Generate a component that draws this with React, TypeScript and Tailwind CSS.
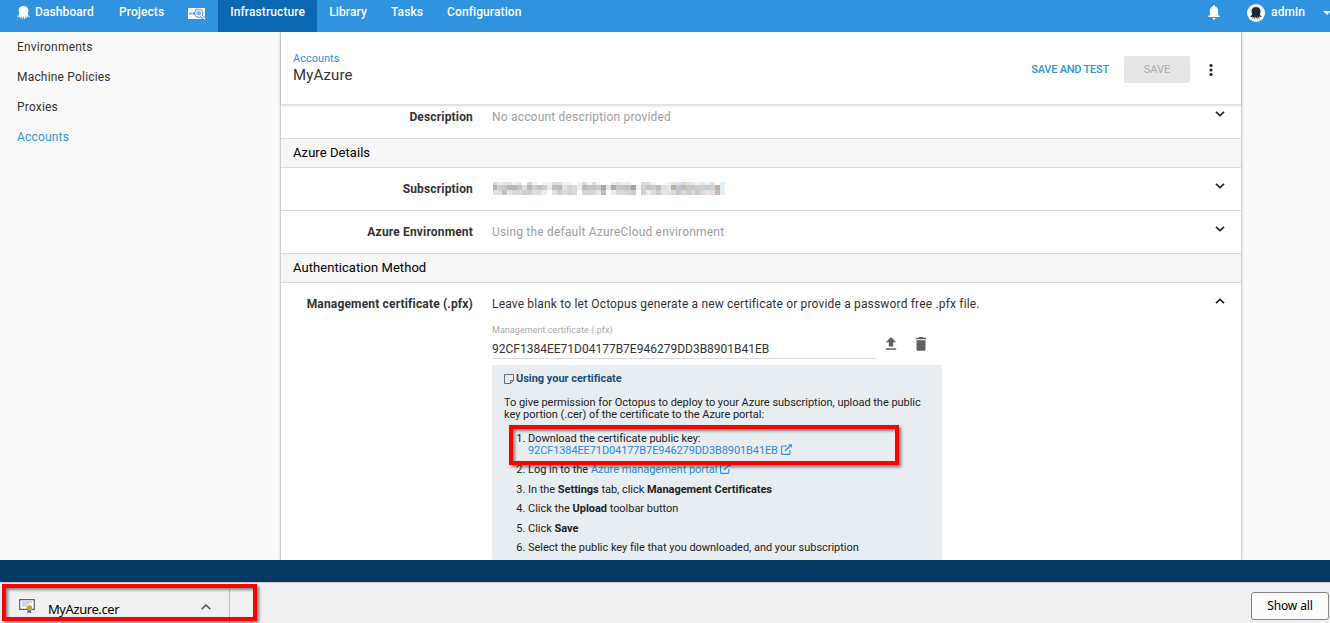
import type { ReactNode } from "react";

function Octopus({ className }: { className: string }) {
  return (
    <svg viewBox="1 1 24 24" className={className} fill="currentColor">
      <path d="M13 1C7.500 1 4 4.500 4 9.500c0 2.500 1 3.500 1 5.500 0 2.500-2 4-4 5.500 2 .8 4 .3 5.500-.7-.2 1.700-1 3-1.500 4.200 2.300-.5 3.800-2 4.500-4 .5 2-.1 3.700.5 5.500 1.800-1 2-3.500 2.500-5.500 1 2 1.200 4.500 3.500 5.500.6-1.900-.6-3.600-.2-5.500 1 2 2.700 3.500 4.700 3.800-.4-1.300-1.700-2.600-1.700-4.300 1.900 1.300 4 1.700 6.200 1-2.500-1.500-4-3-4-5.500 0-2 1.200-3.200 1.200-5.700C22.200 4.500 18.500 1 13 1z" />
    </svg>
  );
}

function Chevron({ up = false }: { up?: boolean }) {
  return (
    <svg viewBox="0 0 10 6" className="h-[6px] w-[10px]" fill="none" stroke="#222" strokeWidth="1.7">
      <path d={up ? "M1 5.100 5 1.300 9 5.100" : "M1 .9 5 4.700 9 .9"} />
    </svg>
  );
}

function External() {
  return (
    <svg viewBox="0 0 11 11" className="-my-[2px] ml-[3px] inline-block h-[11px] w-[11px] align-[1px]" fill="none" stroke="#2f93e0" strokeWidth="1.100">
      <path d="M6 2H1.500Q.6 2 .6 3v6.400q0 1 .9 1h6.400q1 0 1-1V6" />
      <path d="M4 7 9.500 1.500" strokeWidth="1.500" />
      <path d="M7 .2h3.900v3.900z" fill="#2f93e0" stroke="none" />
    </svg>
  );
}

const mosaic = [
  ["#ddd6cf", "#eceae8", "#e8e6ea", "#e6e2e0", "#eef0f2", "#e4e8ec", "#ffffff", "#d8d8da", "#f4f2f0", "#ffffff", "#eef2f6", "#f4f2f4", "#dcdcdc", "#e2dedc", "#f0eee8", "#f0f2f4", "#ffffff", "#f2f2f2", "#dcdcdc", "#f6f4f2", "#dcdcde", "#f4f4f6", "#ffffff", "#ffffff", "#e8e8e8", "#e4e2e4", "#eeeeee", "#eeeae6", "#ffffff", "#ffffff", "#dadada", "#dedede", "#f2f2f4", "#ffffff", "#ffffff", "#f2f2f2", "#e8e6e4", "#e0e2e4", "#dedada", "#e4e4e6", "#e6e8ea", "#f0f0f0", "#eae8e6", "#eef2f4", "#e2e2e2", "#ffffff", "#e4eef8"],
  ["#b8b4b8", "#d2cdca", "#c4c8cc", "#bbb5ae", "#b7b7b9", "#c3c8cb", "#dedede", "#b0bdc4", "#d8cfc3", "#b8c3cc", "#d0ccca", "#e8e8ea", "#c8bdb5", "#b0bec8", "#e8e1d8", "#d7d7d9", "#dadddd", "#ececec", "#bdb7c0", "#c3c1ca", "#b9c3c8", "#d0ccc5", "#a0a8b0", "#e9e2d5", "#9fadb8", "#c8c8c4", "#c0c7bf", "#bec2c8", "#a99d9d", "#f4f4f4", "#d2d2d2", "#c8c3c0", "#cbc9c9", "#b0bdc3", "#dedede", "#e4e4e4", "#b8afa7", "#bac9d3", "#c8b9b1", "#c8c8ca", "#bdcbd1", "#cccccc", "#c6d0d6", "#c9c9cb", "#d0d0d0", "#bcafa8", "#e4eef8"],
  ["#e1e1df", "#dddddd", "#b8c3c6", "#e6e3e1", "#d8d8d8", "#dadada", "#d4cccc", "#c8d3d8", "#d9dfe2", "#d8dfe4", "#efefef", "#ffffff", "#e2dfdd", "#d1cece", "#dadada", "#d6d2ce", "#d3d9dc", "#ffffff", "#d8d4d7", "#d8d5d0", "#ddd6d3", "#e6e6e8", "#b8bdba", "#ffffff", "#ebebeb", "#dadada", "#d9d9db", "#ded4cf", "#cecdca", "#ffffff", "#d3cfd1", "#ececec", "#dedede", "#c8cccb", "#e4e4e4", "#e5e2df", "#d6dbde", "#bfc9d2", "#d9d9d9", "#c9cfca", "#d8d8d4", "#d0c8c3", "#d5dadd", "#e8e4e2", "#e4dcd8", "#c4b8b1", "#e4eef8"],
];

function Redacted() {
  return (
    <svg viewBox="0 0 235 13" className="mb-[2px] h-[13px] w-[235px]" shapeRendering="crispEdges">
      {mosaic.map((row, r) =>
        row.map((c, i) => (
          <rect key={`${r}-${i}`} x={i * 4.950 + 0.5} y={[0, 3, 8][r]} width="5" height={[3, 5, 5][r]} fill={c} />
        ))
      )}
    </svg>
  );
}

function SectionTitle({ children }: { children: ReactNode }) {
  return (
    <div className="flex h-[29px] items-center border-b border-[#dcdcdc] bg-[#f6f6f6] pl-3 text-[13px] tracking-[0.060px] text-black">
      {children}
    </div>
  );
}

function Row({ label, children, first = false }: { label: string; children: ReactNode; first?: boolean }) {
  return (
    <div className={first ? "flex h-[34px] items-start border-b border-[#dcdcdc] pt-[2px]" : "flex h-[43px] items-start border-b border-[#dcdcdc] pt-[11px]"}>
      <div className="w-[192px] text-right text-[12px] leading-5 font-bold tracking-[0.170px]">{label}</div>
      <div className="ml-[19px] flex h-5 grow items-center text-[12px] tracking-[0.190px] text-[#9e9e9e]">{children}</div>
      <div className="mr-[16px] flex h-[13px] items-center">
        <Chevron />
      </div>
    </div>
  );
}

function NavItem({ children }: { children: ReactNode }) {
  return <div className="flex h-full items-center px-3 pb-2">{children}</div>;
}

export default function App() {
  return (
    <div className="relative flex h-[623px] w-[1330px] flex-col overflow-hidden bg-[#fafafa] font-['Roboto',sans-serif] text-[13px] text-[#333]">
      <nav className="flex h-8 shrink-0 bg-[#2f93e0] text-[12px] font-medium tracking-[0.100px] text-white">
        <div className="flex h-full w-[107px] items-center pb-2 pl-[17px]">
          <Octopus className="mt-[1px] mr-[5px] h-[13px] w-[13px]" />
          Dashboard
        </div>
        <NavItem>Projects</NavItem>
        <div className="flex h-full w-[42px] items-center justify-center pb-[6px]">
          <svg viewBox="0 0 18 13" className="h-[13px] w-[18px]" fill="none">
            <path d="M0 1h17v11H0z" fill="#fff" />
            <path d="M1.500 5.500h2v2h-2zM4.500 5.500h3v2h-3z" fill="#2f93e0" />
            <circle cx="10.800" cy="6.200" r="4.500" fill="#2f93e0" />
            <circle cx="10.800" cy="6.200" r="3" fill="#7fbcec" stroke="#fff" strokeWidth="1.200" />
            <path d="m13.300 8.800 4 3.700" stroke="#2f93e0" strokeWidth="3" />
            <path d="m13.300 8.800 3.800 3.500" stroke="#fff" strokeWidth="1.500" />
          </svg>
        </div>
        <div className="flex h-full w-[99px] items-center bg-[#0a67b1] pb-2 pl-3">Infrastructure</div>
        <NavItem>Library</NavItem>
        <NavItem>Tasks</NavItem>
        <NavItem>Configuration</NavItem>
        <div className="ml-auto flex h-full items-center pb-2">
          <svg viewBox="0 0 12 15" className="mr-[27px] h-[15px] w-[12px]" fill="currentColor">
            <path d="M6 0c-.7 0-1.100.5-1.100 1.100v.5C3 2.100 1.900 3.800 1.900 5.800v4L.3 11.300v.8h11.400v-.8l-1.600-1.500v-4c0-2-1.100-3.700-3-4.200v-.5C7.100.5 6.700 0 6 0zM4.500 13c0 .8.700 1.500 1.500 1.500S7.500 13.800 7.500 13z" />
          </svg>
          <div className="mt-[2px] mr-[6px] flex h-[18px] w-[18px] items-center justify-center rounded-full bg-white text-[#15293d]">
            <Octopus className="h-[12px] w-[12px]" />
          </div>
          admin
          <svg viewBox="0 0 8 4" className="mt-[2px] -mr-px ml-[18px] h-[4px] w-[8px]" fill="currentColor">
            <path d="M0 0h8L4 4z" />
          </svg>
        </div>
      </nav>

      <main className="flex h-[528px] shrink-0 overflow-hidden">
        <aside className="w-[280px] shrink-0 pl-[17px] text-[12px] leading-[30px] tracking-[0.190px]">
          <div>Environments</div>
          <div>Machine Policies</div>
          <div>Proxies</div>
          <div className="text-[#2f93e0]">Accounts</div>
        </aside>
        <section className="h-[528px] w-[962px] shrink-0 border-x border-[#cfcfcf] bg-white shadow-[0_0_3px_rgba(0,0,0,0.150)]">
          <header className="relative flex h-[73px] items-center border-b border-[#e0e0e0] pl-3 shadow-[0_1px_2px_rgba(0,0,0,0.150)]">
            <div className="pt-px">
              <div className="text-[11px] leading-[14px] text-[#2f93e0]">Accounts</div>
              <div className="text-[15px] leading-[19px] tracking-[0.120px]">MyAzure</div>
            </div>
            <div className="mt-[4px] ml-auto text-[11px] font-medium tracking-[-0.220px] text-[#2f93e0]">SAVE AND TEST</div>
            <div className="mt-[3px] ml-[15px] flex h-[27px] w-[66px] items-center justify-center rounded-[2px] bg-[#e5e5e5] pt-px text-[11px] text-[#aaa]">SAVE</div>
            <svg viewBox="0 0 4 14" className="mt-[4px] mr-[28px] ml-[19px] h-[14px] w-[4px]" fill="#222">
              <circle cx="2" cy="2.500" r="1.600" />
              <circle cx="2" cy="7" r="1.600" />
              <circle cx="2" cy="11.500" r="1.600" />
            </svg>
          </header>
          <Row label="Description" first>No account description provided</Row>
          <SectionTitle>Azure Details</SectionTitle>
          <Row label="Subscription"><Redacted /></Row>
          <Row label="Azure Environment">Using the default AzureCloud environment</Row>
          <SectionTitle>Authentication Method</SectionTitle>
          <div className="flex items-start pt-[11px]">
            <div className="w-[192px] text-right text-[12px] leading-5 font-bold tracking-[0.170px]">Management certificate (.pfx)</div>
            <div className="ml-[19px] w-[500px]">
              <div className="text-[12px] leading-5 tracking-[0.170px]">Leave blank to let Octopus generate a new certificate or provide a password free .pfx file.</div>
              <div className="flex h-[45px]">
                <div className="w-[384px] border-b border-[#dcdcdc] pt-[10px]">
                  <div className="text-[9px] leading-[12px] tracking-[0.050px] text-[#aaa]">Management certificate (.pfx)</div>
                  <div className="mt-[5px] text-[12px] leading-[17px]">92CF1384EE71D04177B7E946279DD3B8901B41EB</div>
                </div>
                <svg viewBox="0 0 12 13" className="mt-[23px] ml-[9px] h-[13px] w-[12px]" fill="#616161">
                  <path d="M6 0 .8 5.300h3V9.500h4.400V5.300h3zM.8 11.200h10.400v1.500H.8z" />
                </svg>
                <svg viewBox="0 0 12 14" className="mt-[23px] ml-[18px] h-[14px] w-[12px]" fill="#616161">
                  <path d="M4.200 0h3.600l.7.800h2.700v1.500H.8V.8h2.700zM1.500 3.200h9v9q0 1.500-1.500 1.500H3q-1.500 0-1.500-1.500z" />
                </svg>
              </div>
              <div className="mt-[6px] h-[210px] w-[450px] bg-[#e8edf1] pt-[7px] pl-3 text-[11px] leading-[12px] tracking-[-0.030px] text-[#222]">
                <div className="flex items-center leading-[13px] font-bold text-[#1a4f78]">
                  <svg viewBox="0 0 10 10" className="mr-[2px] h-[10px] w-[10px]" fill="none" stroke="#62727d">
                    <path d="M.5.5h9v6l-3 3h-6zM9.500 6.500h-3v3" />
                  </svg>
                  Using your certificate
                </div>
                <p className="mt-[12px] whitespace-nowrap">
                  To give permission for Octopus to deploy to your Azure subscription, upload the public
                  <br />
                  key portion (.cer) of the certificate to the Azure portal:
                </p>
                <ol className="mt-[12px] flex list-decimal flex-col gap-[7.400px] pl-[24px] whitespace-nowrap">
                  <li>
                    Download the certificate public key:
                    <br />
                    <span className="tracking-[-0.110px] text-[#2f8ade]">92CF1384EE71D04177B7E946279DD3B8901B41EB<External /></span>
                  </li>
                  <li>Log in to the <span className="text-[#2f8ade]">Azure management portal<External /></span></li>
                  <li>In the <b>Settings</b> tab, click <b>Management Certificates</b></li>
                  <li>Click the <b>Upload</b> toolbar button</li>
                  <li>Click <b>Save</b></li>
                  <li>Select the public key file that you downloaded, and your subscription</li>
                </ol>
              </div>
            </div>
            <div className="mt-[4px] mr-[16px] ml-auto"><Chevron up /></div>
          </div>
        </section>
      </main>

      <div className="h-[22px] shrink-0 bg-[#043a63]" />
      <footer className="flex h-[41px] shrink-0 items-start border-t border-[#d0d0d0] bg-[#f1f1f1] font-['Noto_Sans','Open_Sans',sans-serif] text-[12px] text-black">
        <div className="mt-[6px] flex h-[34px] w-[230px] items-center border-r border-[#bbb] pl-[19px]">
          <svg viewBox="0 0 16 15" className="mt-px h-[15px] w-[16px]" fill="none">
            <path d="M.7.7h14.600v9.600H.7z" fill="#fff" stroke="#695e50" strokeWidth="1.200" />
            <path d="M3 3h10M3 5h7M3 7h5" stroke="#9caabd" />
            <path d="M8.500 10v4.500l1.800-1.300 1.800 1.300V10z" fill="#306bb1" />
            <circle cx="10.400" cy="9" r="2.700" fill="#d59c24" />
          </svg>
          <div className="mt-[8px] ml-[13px] text-[13px] tracking-[-0.420px]">MyAzure.cer</div>
          <svg viewBox="0 0 10 6" className="mt-[2px] mr-[18px] ml-auto h-[6px] w-[10px]" fill="none" stroke="#555" strokeWidth="1.500">
            <path d="M.7 5.300 5 1l4.300 4.300" />
          </svg>
        </div>
        <button className="mt-[9px] mr-px ml-auto h-[28px] w-[78px] rounded-[3px] border border-[#858585] bg-[#fcfcfc] pb-px tracking-[-0.100px]">Show all</button>
      </footer>

      <div className="absolute top-[425px] left-[509px] h-[40px] w-[390px] border-4 border-[#fe0000] shadow-[2px_2px_3px_rgba(0,0,0,0.500),inset_2px_2px_3px_rgba(0,0,0,0.450)]" />
      <div className="absolute top-[584px] left-[2px] h-[37px] w-[255px] border-4 border-[#fe0000] shadow-[2px_2px_3px_rgba(0,0,0,0.500),inset_2px_2px_3px_rgba(0,0,0,0.450)]" />
    </div>
  );
}
